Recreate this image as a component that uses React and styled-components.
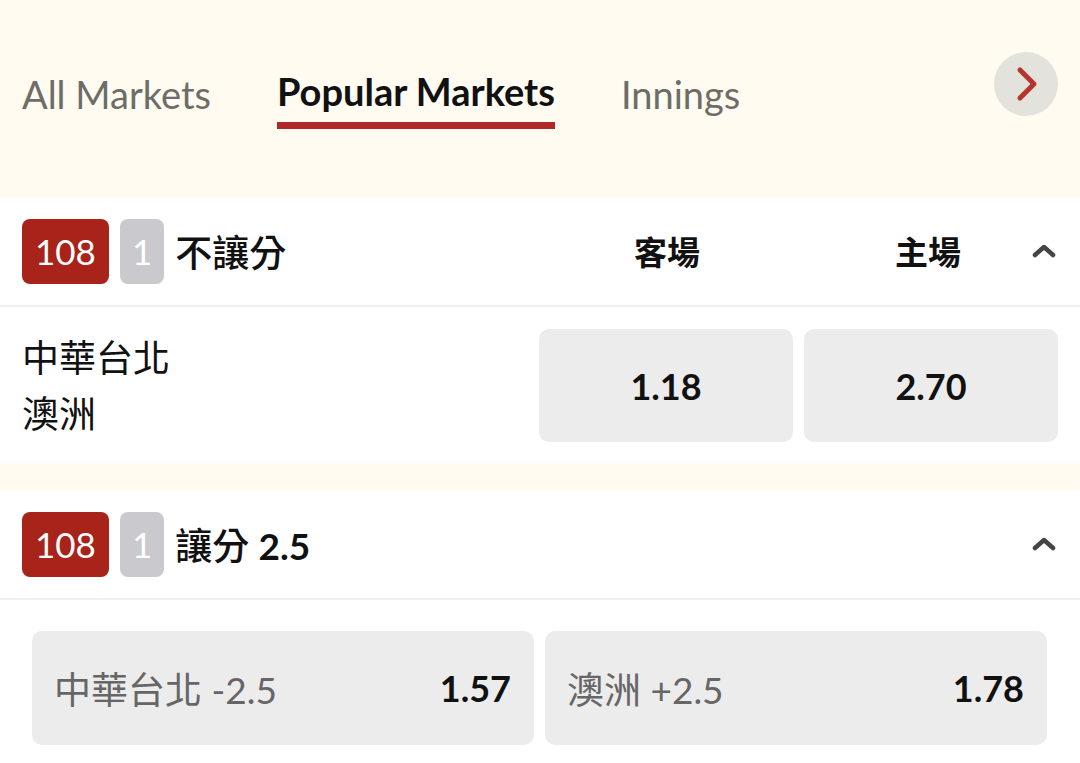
import styled, { createGlobalStyle } from 'styled-components'

const GlobalStyle = createGlobalStyle`
  html, body {
    margin: 0;
    padding: 0;
    background: #fffbf0;
    font-family: 'Lato', 'Noto Sans CJK TC', sans-serif;
    color: #111;
  }
  * {
    box-sizing: border-box;
  }
`

const tabs = ['All Markets', 'Popular Markets', 'Innings']

const Badges = () => (
  <>
    <Badge tone="red">108</Badge>
    <Badge tone="grey">1</Badge>
  </>
)

const ChevronUp = () => (
  <ChevronBox>
    <svg width="26" height="18" viewBox="0 0 26 18">
      <path
        d="M3 13 L12 5 L21 13"
        fill="none"
        stroke="#454545"
        strokeWidth="4.5"
        strokeLinecap="round"
        strokeLinejoin="round"
      />
    </svg>
  </ChevronBox>
)

const App = () => {
  return (
    <Page>
      <GlobalStyle />
      <TabBar>
        <Tabs>
          {tabs.map((t) => (
            <Tab key={t} active={t === 'Popular Markets'}>
              {t}
            </Tab>
          ))}
        </Tabs>
        <NextButton>
          <svg width="26" height="36" viewBox="0 0 26 36">
            <path
              d="M5 4 L19 18 L5 32"
              fill="none"
              stroke="#b3372c"
              strokeWidth="5"
              strokeLinecap="round"
              strokeLinejoin="round"
            />
          </svg>
        </NextButton>
      </TabBar>

      <Card>
        <CardHeader>
          <Title>
            <Badges />
            <MarketName>不讓分</MarketName>
          </Title>
          <ColLabel width={254} gapRight={30}>
            客場
          </ColLabel>
          <ColLabel width={208}>主場</ColLabel>
          <ChevronUp />
        </CardHeader>
        <MatchRow>
          <Teams>
            <Team>中華台北</Team>
            <Team>澳洲</Team>
          </Teams>
          <OddsButton>1.18</OddsButton>
          <OddsButton>2.70</OddsButton>
        </MatchRow>
      </Card>

      <Card grow>
        <CardHeader>
          <Title>
            <Badges />
            <MarketName>
              讓分 <Num>2.5</Num>
            </MarketName>
          </Title>
          <ChevronUp />
        </CardHeader>
        <HandicapRow>
          <SelectionButton>
            <SelectionLabel>中華台北 -2.5</SelectionLabel>
            <Price>1.57</Price>
          </SelectionButton>
          <SelectionButton>
            <SelectionLabel>澳洲 +2.5</SelectionLabel>
            <Price>1.78</Price>
          </SelectionButton>
        </HandicapRow>
      </Card>
    </Page>
  )
}

const Page = styled.div`
  width: 1080px;
  height: 763px;
  overflow: hidden;
  display: flex;
  flex-direction: column;
`

const TabBar = styled.div`
  height: 197px;
  padding: 0 22px;
  display: flex;
  align-items: center;
  justify-content: space-between;
  flex-shrink: 0;
`

const Tabs = styled.div`
  display: flex;
  align-items: center;
  gap: 66px;
`

const Tab = styled.div`
  font-size: 38px;
  line-height: 44px;
  padding-bottom: 9px;
  font-weight: ${({ active }) => (active ? 700 : 400)};
  color: ${({ active }) => (active ? '#111' : '#6d6d68')};
  border-bottom: ${({ active }) => (active ? '7px solid #b0282a' : '0')};
  white-space: nowrap;
`

const NextButton = styled.div`
  width: 64px;
  height: 64px;
  border-radius: 50%;
  background: #e4e2dc;
  display: flex;
  align-items: center;
  justify-content: center;
  margin-bottom: 29px;
  padding-left: 4px;
`

const Card = styled.div`
  background: #fff;
  flex-shrink: 0;
  flex-grow: ${({ grow }) => (grow ? 1 : 0)};
  margin-bottom: ${({ grow }) => (grow ? 0 : 27)}px;
`

const CardHeader = styled.div`
  height: 110px;
  padding: 0 22px;
  display: flex;
  align-items: center;
  border-bottom: 2px solid #efefef;
`

const Title = styled.div`
  flex: 1;
  display: flex;
  align-items: center;
`

const Badge = styled.div`
  height: 65px;
  padding: 0 ${({ tone }) => (tone === 'red' ? '13px' : '12px')};
  border-radius: 8px;
  background: ${({ tone }) => (tone === 'red' ? '#a8231a' : '#c9c9ce')};
  color: #fff;
  font-size: 35px;
  display: flex;
  align-items: center;
  justify-content: center;
  margin-right: 11px;
`

const MarketName = styled.div`
  font-size: 37px;
  font-weight: 500;
  color: #111;
`

const Num = styled.span`
  font-weight: 700;
`

const ColLabel = styled.div`
  width: ${({ width }) => width}px;
  margin-right: ${({ gapRight }) => gapRight || 0}px;
  text-align: center;
  font-size: 33px;
  font-weight: 700;
  color: #111;
`

const ChevronBox = styled.div`
  width: 26px;
  display: flex;
  align-items: center;
  justify-content: center;
`

const MatchRow = styled.div`
  display: flex;
  align-items: center;
  gap: 11px;
  padding: 22px 22px 21px;
`

const Teams = styled.div`
  flex: 1;
  display: flex;
  flex-direction: column;
`

const Team = styled.div`
  font-size: 37px;
  line-height: 56px;
  color: #111;
`

const OddsButton = styled.div`
  width: 254px;
  height: 113px;
  border-radius: 10px;
  background: #ececec;
  display: flex;
  align-items: center;
  justify-content: center;
  font-size: 36px;
  font-weight: 700;
  color: #111;
`

const HandicapRow = styled.div`
  display: grid;
  grid-template-columns: 1fr 1fr;
  gap: 11px;
  padding: 31px 33px 0 32px;
`

const SelectionButton = styled.div`
  height: 114px;
  border-radius: 10px;
  background: #ececec;
  display: flex;
  align-items: center;
  justify-content: space-between;
  padding: 0 23px 0 22px;
`

const SelectionLabel = styled.div`
  font-size: 37px;
  color: #666;
`

const Price = styled.div`
  font-size: 36px;
  font-weight: 700;
  color: #111;
`

export default App
